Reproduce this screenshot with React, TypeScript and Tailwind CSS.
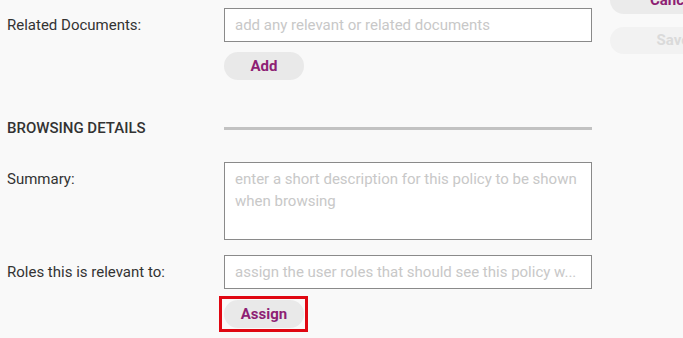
export default function App() {
  return (
    <div className="w-[683px] h-[338px] overflow-hidden bg-[#f9f9f9] text-[#333333] font-['Roboto',sans-serif] text-[15px]">
      <div className="flex">
        {/* Form */}
        <div className="w-[592px] shrink-0 pt-[8px]">
          {/* Related Documents */}
          <div className="flex">
            <div className="w-[224px] pl-[7px] h-[34px] flex items-center">Related Documents:</div>
            <div className="w-[368px]">
              <div className="h-[34px] border border-[#8a8a8a] bg-white flex items-center px-[10px] text-[#c8c8c8]">
                add any relevant or related documents
              </div>
              <button className="mt-[10px] w-[80px] h-[28px] rounded-full bg-[#e9e9e9] font-bold text-[#8e1f74]">
                Add
              </button>
            </div>
          </div>

          {/* Browsing details */}
          <div className="flex items-center mt-[38px] h-[20px]">
            <div className="w-[224px] pl-[7px] font-medium uppercase">Browsing Details</div>
            <div className="w-[368px] h-[3px] bg-[#c2c2c2]"></div>
          </div>

          {/* Summary */}
          <div className="flex mt-[24px]">
            <div className="w-[224px] pl-[7px] pt-[6px] leading-[22px]">Summary:</div>
            <div className="w-[368px] h-[78px] border border-[#8a8a8a] bg-white px-[10px] pt-[5px] leading-[22px] text-[#c8c8c8]">
              enter a short description for this policy to be shown when browsing
            </div>
          </div>

          {/* Roles */}
          <div className="flex mt-[15px]">
            <div className="w-[224px] pl-[7px] h-[34px] flex items-center">Roles this is relevant to:</div>
            <div className="w-[368px]">
              <div className="h-[34px] border border-[#8a8a8a] bg-white flex items-center px-[10px] text-[#c8c8c8] whitespace-nowrap">
                assign the user roles that should see this policy w...
              </div>
              <div className="mt-[7px] -ml-[5px] w-[89px] h-[36px] border-[3px] border-[#e00712] flex items-center pl-[2px]">
                <button className="w-[80px] h-[28px] rounded-full bg-[#e9e9e9] font-bold text-[#8e1f74]">
                  Assign
                </button>
              </div>
            </div>
          </div>
        </div>

        {/* Side actions */}
        <div className="ml-[18px] -mt-[14px] flex flex-col gap-[13px] shrink-0">
          <button className="w-[126px] h-[28px] rounded-full bg-[#ebebeb] font-bold text-[#8e1f74]">
            Cancel
          </button>
          <button className="w-[126px] h-[27px] rounded-full bg-[#f2f2f2] font-bold text-[#dadada]">
            Save
          </button>
        </div>
      </div>
    </div>
  );
}
